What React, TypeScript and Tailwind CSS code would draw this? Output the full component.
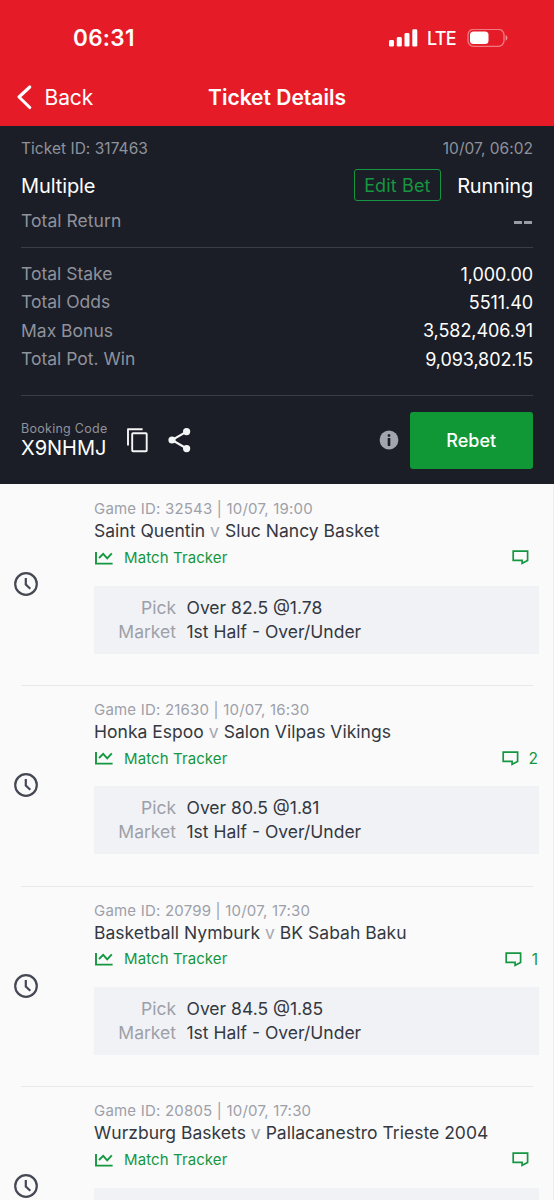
type Game = {
  id: string;
  time: string;
  home: string;
  away: string;
  pick?: string;
  comments?: number;
};

const games: Game[] = [
  { id: "32543", time: "10/07, 19:00", home: "Saint Quentin", away: "Sluc Nancy Basket", pick: "Over 82.5 @1.78" },
  { id: "21630", time: "10/07, 16:30", home: "Honka Espoo", away: "Salon Vilpas Vikings", pick: "Over 80.5 @1.81", comments: 2 },
  { id: "20799", time: "10/07, 17:30", home: "Basketball Nymburk", away: "BK Sabah Baku", pick: "Over 84.5 @1.85", comments: 1 },
  { id: "20805", time: "10/07, 17:30", home: "Wurzburg Baskets", away: "Pallacanestro Trieste 2004" },
];

const totals = [
  ["Total Stake", "1,000.00"],
  ["Total Odds", "5511.40"],
  ["Max Bonus", "3,582,406.91"],
  ["Total Pot. Win", "9,093,802.15"],
];

function StatusBar() {
  return (
    <div className="flex h-[76px] items-center pl-[73px] pr-[46px]">
      <span className="text-[22.5px] font-semibold tracking-[0.3px]">06:31</span>
      <svg className="ml-auto" width="30" height="18" viewBox="0 0 30 18" fill="white">
        <rect x="1" y="11" width="5" height="6.6" rx="1.4" />
        <rect x="8.8" y="8" width="5" height="9.6" rx="1.4" />
        <rect x="16.5" y="4" width="5" height="13.6" rx="1.4" />
        <rect x="24.3" y="0.3" width="5" height="17.3" rx="1.4" />
      </svg>
      <span className="ml-[9px] text-[18px] font-medium tracking-[-0.7px]">LTE</span>
      <svg className="ml-[11px]" width="41" height="18" viewBox="0 0 41 18">
        <rect x="1" y="0.4" width="36" height="16.9" rx="5.5" fill="none" stroke="white" strokeOpacity="0.42" strokeWidth="1.3" />
        <rect x="3" y="2.4" width="18.5" height="12.7" rx="3.5" fill="white" />
        <path d="M38.6 6c2.4.9 2.4 4.8 0 5.7z" fill="white" fillOpacity="0.5" />
      </svg>
    </div>
  );
}

function TitleBar() {
  return (
    <div className="grid h-[50px] grid-cols-[1fr_auto_1fr] items-start">
      <div className="flex h-[42px] items-center pl-[16px]">
        <svg width="16" height="26" viewBox="0 0 16 26" fill="none" stroke="white" strokeWidth="3.1" strokeLinecap="round" strokeLinejoin="round">
          <path d="M13.8 3 3 13l10.8 10.5" />
        </svg>
        <span className="ml-[12.5px] pt-px text-[21px] tracking-[-0.1px]">Back</span>
      </div>
      <h1 className="text-[21px] font-semibold leading-[43px]">Ticket Details</h1>
    </div>
  );
}

function Summary() {
  return (
    <section className="flex h-[358px] flex-col bg-[#1b1e26] px-[21px] text-white">
      <div className="flex h-[45px] items-center justify-between text-[15.5px] tracking-[0.03px] text-[#8f929c]">
        <span>Ticket ID: 317463</span>
        <span>10/07, 06:02</span>
      </div>
      <div className="flex h-[30px] items-center text-[20px]">
        <span className="tracking-[-0.1px]">Multiple</span>
        <button className="ml-auto mt-[-2px] flex h-[32px] w-[87.5px] items-center justify-center rounded-[3px] border-[1.5px] border-[#159640] text-[18px] tracking-[0.15px] text-[#159640]">
          Edit Bet
        </button>
        <span className="ml-[16px] tracking-[-0.2px]">Running</span>
      </div>
      <div className="flex h-[47px] items-center justify-between border-b border-[#3b3e46] text-[17.5px] tracking-[0.05px] text-[#8f929c]">
        <span className="mt-[-5px]">Total Return</span>
        <span className="mr-px mt-[-3px] flex gap-[2.5px]">
          <i className="h-[3px] w-[8px] bg-[#9a9ca4]" />
          <i className="h-[3px] w-[8px] bg-[#9a9ca4]" />
        </span>
      </div>
      <dl className="h-[148px] border-b border-[#3b3e46] pt-[12px]">
        {totals.map(([label, value]) => (
          <div key={label} className="flex h-[28.4px] items-center justify-between">
            <dt className="text-[17.5px] text-[#8f929c]">{label}</dt>
            <dd className="text-[18px] tracking-[-0.08px]">{value}</dd>
          </div>
        ))}
      </dl>
      <div className="flex h-[88px] items-center">
        <div className="w-[105px] whitespace-nowrap">
          <div className="pt-px text-[12.5px] leading-[16px] tracking-[0.28px] text-[#8f929c]">Booking Code</div>
          <div className="text-[20px] leading-[23px]">X9NHMJ</div>
        </div>
        <svg width="22" height="26" viewBox="0 0 22 26" fill="none" stroke="#f5f5f7" strokeWidth="1.9" strokeLinejoin="round">
          <path d="M2 18.5V2.2h14.6" />
          <rect x="6.2" y="6.3" width="14.5" height="18" rx="0.8" />
        </svg>
        <svg className="ml-[20px]" width="23" height="26" viewBox="0 0 23 26" fill="#f5f5f7" stroke="#f5f5f7">
          <path d="M18.6 4.7 4 13l14.6 8.5" fill="none" strokeWidth="2.1" />
          <circle cx="18.6" cy="4.6" r="3.6" stroke="none" />
          <circle cx="4" cy="13" r="3.6" stroke="none" />
          <circle cx="18.6" cy="21.6" r="3.6" stroke="none" />
        </svg>
        <svg className="ml-auto" width="20" height="20" viewBox="0 0 20 20">
          <circle cx="10" cy="10" r="9.4" fill="#a2a4ae" />
          <rect x="8.7" y="4.3" width="2.6" height="2.4" rx="0.6" fill="#1b1e26" />
          <rect x="8.7" y="8" width="2.6" height="8" rx="0.4" fill="#1b1e26" />
        </svg>
        <button className="ml-[11px] h-[57px] w-[123.5px] rounded-[3px] bg-[#109837] text-[18px] font-medium">
          Rebet
        </button>
      </div>
    </section>
  );
}

function GameRow({ game }: { game: Game }) {
  return (
    <article className="h-[200.8px] shrink-0 pl-[21px] pr-[15px]">
      <div className="flex h-[200.8px]">
        <div className="ml-[-8px] flex h-[200px] w-[81px] shrink-0 items-center">
          <svg width="26" height="26" viewBox="0 0 26 26" fill="none" stroke="#454954" strokeWidth="2.2">
            <circle cx="13" cy="13" r="10.8" />
            <path d="M12.8 7v6.6l4.5 4.2" />
          </svg>
        </div>
        <div className="min-w-0 flex-1 whitespace-nowrap pt-[14px]">
          <div className="text-[15px] leading-[21px] tracking-[0.2px] text-[#9da0a9]">
            Game ID: {game.id} | {game.time}
          </div>
          <div className="text-[17.5px] leading-[24px] tracking-[0.02px] text-[#343841]">
            {game.home} <span className="text-[#a5a8b0]">v</span> {game.away}
          </div>
          <div className="flex h-[30px] items-center text-[15.5px] text-[#159640]">
            <svg className="mt-[-1px]" width="19" height="14" viewBox="0 0 19 14" fill="none" stroke="currentColor" strokeWidth="1.9">
              <path d="M2 1v11.6h16.6" />
              <path d="m5 7 4.2-4.2 4 4.6 4.6-5.1" />
            </svg>
            <span className="ml-[11px] text-[15px] tracking-[0.1px]">Match Tracker</span>
            <span className={game.comments ? "ml-auto flex items-center" : "ml-auto mr-[9px] flex items-center"}>
              <svg className="mt-[-1px]" width="17" height="15" viewBox="0 0 17 15" fill="none" stroke="currentColor" strokeWidth="1.7">
                <path d="M1.2 1.2h14.4v9.2l-5.5 2.9v-2.9H1.2z" />
              </svg>
              {game.comments && <span className="ml-[10px] tracking-normal">{game.comments}</span>}
            </span>
          </div>
          <dl className="mr-[-0.5px] mt-[12.5px] grid h-[68px] grid-cols-[82px_auto] content-center gap-x-[10.5px] bg-[#f1f2f5] text-[17.5px] leading-[24px] text-[#343841]">
            {game.pick && (
              <>
                <dt className="text-right text-[#9da0a9]">Pick</dt>
                <dd>{game.pick}</dd>
                <dt className="text-right text-[#9da0a9]">Market</dt>
                <dd>1st Half - Over/Under</dd>
              </>
            )}
          </dl>
        </div>
      </div>
      <div className="mr-[5px] h-px bg-[#e7e8ec]" />
    </article>
  );
}

export default function App() {
  return (
    <main className="flex h-[1200px] w-[554px] flex-col overflow-hidden bg-[#fafafb] font-['Inter',sans-serif]">
      <header className="h-[126px] shrink-0 bg-[#e61b28] text-white">
        <StatusBar />
        <TitleBar />
      </header>
      <div className="shrink-0">
        <Summary />
      </div>
      <div className="min-h-0 flex-1 overflow-hidden border-r border-[#ededf2]">
        {games.map((game) => (
          <GameRow key={game.id} game={game} />
        ))}
      </div>
    </main>
  );
}
